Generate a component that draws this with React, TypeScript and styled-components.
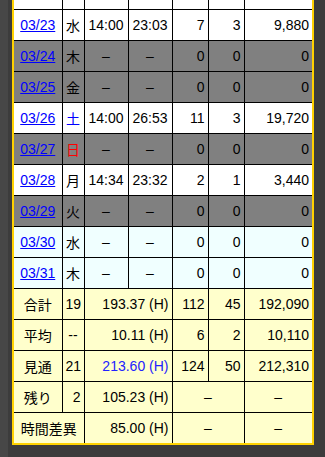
import styled, { createGlobalStyle } from 'styled-components';

type Tone = 'work' | 'off' | 'future' | 'sum';

interface DayRow {
  date: string;
  wd: string;
  wdColor?: string;
  start: string;
  end: string;
  a: string;
  b: string;
  amount: string;
  tone: Tone;
}

const GlobalStyle = createGlobalStyle`
  html {
    background: #474747;
  }
  body {
    margin: 0 0 0 8px;
    padding: 0 0 0 4px;
    min-height: 100vh;
    background: #3c3c3c;
    font-family: 'Liberation Sans', Arial, 'Noto Sans CJK JP', sans-serif;
    overflow: hidden;
  }
`;

const toneBg: Record<Tone, string> = {
  work: '#ffffff',
  off: '#808080',
  future: '#f0ffff',
  sum: '#ffffcc',
};

const Table = styled.table`
  /* page is scrolled: the rows above 03/23 sit under the top edge */
  margin-top: -23px;
  width: 300px;
  table-layout: fixed;
  border-collapse: collapse;
  border: 2px solid #ffd200;
  font-size: 14px;
  color: #000;
`;

const Row = styled.tr<{ $tone: Tone; $scrolled?: boolean }>`
  background: ${(p) => toneBg[p.$tone]};

  td {
    height: ${(p) => (p.$scrolled ? '26px' : '30px')};
    padding-bottom: ${(p) => (p.$scrolled ? '4px' : '0')};
  }
`;

const Cell = styled.td<{ $align?: 'left' | 'center' | 'right'; $color?: string }>`
  padding: 0 3px;
  border: 1px solid #000;
  text-align: ${(p) => p.$align ?? 'right'};
  color: ${(p) => p.$color ?? '#000'};
  white-space: nowrap;
  overflow: hidden;
`;

const DateLink = styled.a`
  color: #0000ff;
  text-decoration: underline;
`;

const days: DayRow[] = [
  { date: '03/22', wd: '火', start: '14:00', end: '23:10', a: '7', b: '3', amount: '9,900', tone: 'work' },
  { date: '03/23', wd: '水', start: '14:00', end: '23:03', a: '7', b: '3', amount: '9,880', tone: 'work' },
  { date: '03/24', wd: '木', start: '–', end: '–', a: '0', b: '0', amount: '0', tone: 'off' },
  { date: '03/25', wd: '金', start: '–', end: '–', a: '0', b: '0', amount: '0', tone: 'off' },
  { date: '03/26', wd: '土', wdColor: '#0000ff', start: '14:00', end: '26:53', a: '11', b: '3', amount: '19,720', tone: 'work' },
  { date: '03/27', wd: '日', wdColor: '#ff0000', start: '–', end: '–', a: '0', b: '0', amount: '0', tone: 'off' },
  { date: '03/28', wd: '月', start: '14:34', end: '23:32', a: '2', b: '1', amount: '3,440', tone: 'work' },
  { date: '03/29', wd: '火', start: '–', end: '–', a: '0', b: '0', amount: '0', tone: 'off' },
  { date: '03/30', wd: '水', start: '–', end: '–', a: '0', b: '0', amount: '0', tone: 'future' },
  { date: '03/31', wd: '木', start: '–', end: '–', a: '0', b: '0', amount: '0', tone: 'future' },
];

export default function App() {
  return (
    <>
      <GlobalStyle />
      <Table>
        <colgroup>
          <col style={{ width: 49 }} />
          <col style={{ width: 22 }} />
          <col style={{ width: 44 }} />
          <col style={{ width: 44 }} />
          <col style={{ width: 36 }} />
          <col style={{ width: 36 }} />
          <col style={{ width: 69 }} />
        </colgroup>
        <tbody>
          {days.map((d, i) => (
            <Row key={d.date} $tone={d.tone} $scrolled={i === 0}>
              <Cell $align='center'>
                <DateLink href='#'>{d.date}</DateLink>
              </Cell>
              <Cell $align='center' $color={d.wdColor}>
                {d.wd}
              </Cell>
              <Cell $align='center'>{d.start}</Cell>
              <Cell $align='center'>{d.end}</Cell>
              <Cell>{d.a}</Cell>
              <Cell>{d.b}</Cell>
              <Cell>{d.amount}</Cell>
            </Row>
          ))}

          <Row $tone='sum'>
            <Cell $align='center'>合計</Cell>
            <Cell>19</Cell>
            <Cell colSpan={2}>193.37 (H)</Cell>
            <Cell>112</Cell>
            <Cell>45</Cell>
            <Cell>192,090</Cell>
          </Row>
          <Row $tone='sum'>
            <Cell $align='center'>平均</Cell>
            <Cell $align='center'>--</Cell>
            <Cell colSpan={2}>10.11 (H)</Cell>
            <Cell>6</Cell>
            <Cell>2</Cell>
            <Cell>10,110</Cell>
          </Row>
          <Row $tone='sum'>
            <Cell $align='center'>見通</Cell>
            <Cell>21</Cell>
            <Cell colSpan={2} $color='#2222ff'>
              213.60 (H)
            </Cell>
            <Cell>124</Cell>
            <Cell>50</Cell>
            <Cell>212,310</Cell>
          </Row>
          <Row $tone='sum'>
            <Cell $align='center'>残り</Cell>
            <Cell>2</Cell>
            <Cell colSpan={2}>105.23 (H)</Cell>
            <Cell colSpan={2} $align='center'>
              –
            </Cell>
            <Cell $align='center'>–</Cell>
          </Row>
          <Row $tone='sum'>
            <Cell colSpan={2} $align='center'>
              時間差異
            </Cell>
            <Cell colSpan={2}>85.00 (H)</Cell>
            <Cell colSpan={2} $align='center'>
              –
            </Cell>
            <Cell $align='center'>–</Cell>
          </Row>
        </tbody>
      </Table>
    </>
  );
}
